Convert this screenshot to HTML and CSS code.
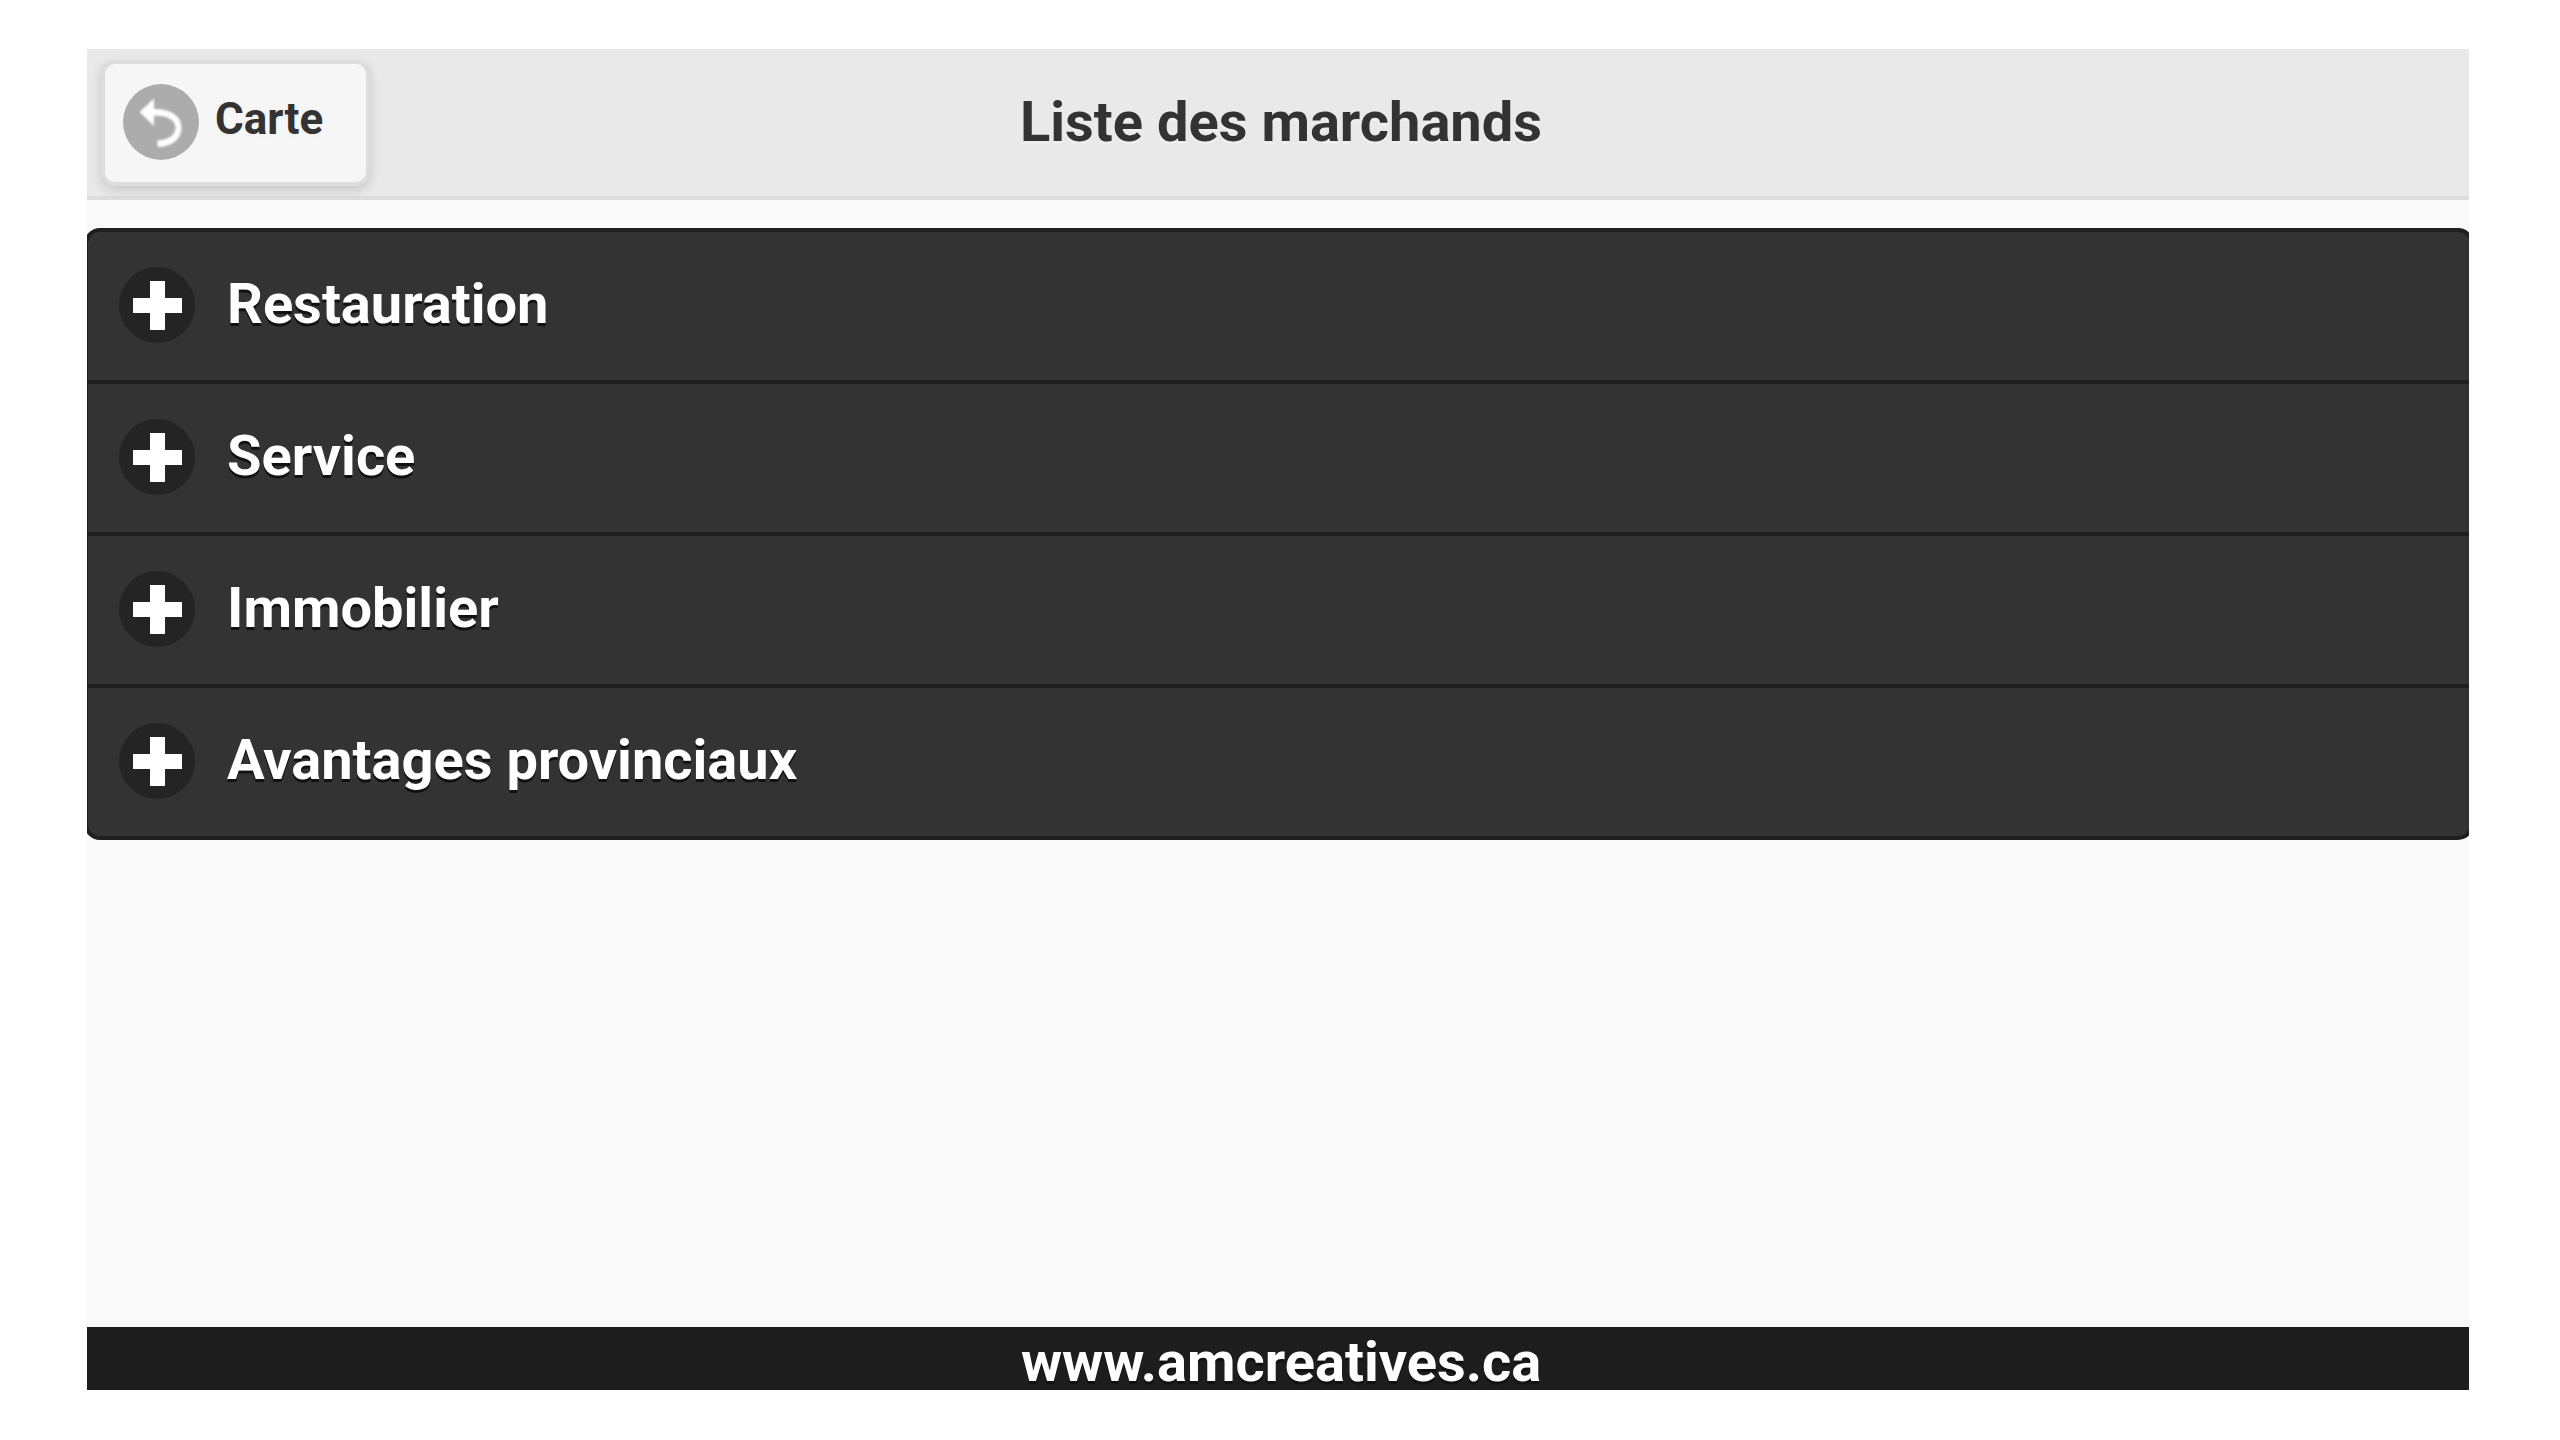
FILE: index.html
```html
<!DOCTYPE html>
<html lang="fr">
<head>
<meta charset="utf-8">
<meta name="viewport" content="width=device-width, initial-scale=1">
<title>Liste des marchands</title>
<link rel="stylesheet" href="styles.css">
</head>
<body>
<svg width="0" height="0" class="sprite" aria-hidden="true">
  <symbol id="plus" viewBox="0 0 76 76">
    <path d="M31 14H46V31H63V46H46V63H31V46H14V31H31Z" fill="#fff"/>
  </symbol>
</svg>
<div class="page">
  <header class="header">
    <a class="back" href="#carte">
      <svg class="icon icon-back" viewBox="0 0 76 76" aria-hidden="true">
        <path class="arrow" d="M16.500 28L31 14.500V25C48 25 58.500 32 58.500 43.500C58.500 55 49 63 34.500 63V56.500C45 56 52.500 51 52.500 43.500C52.500 36 44 31.500 31 31.500V42Z" fill="#fff"/>
      </svg>
      <span class="back-label">Carte</span>
    </a>
    <h1 class="title">Liste des marchands</h1>
  </header>
  <main class="content">
    <div class="list">
      <h2 class="item"><button class="toggle" type="button" aria-expanded="false"><svg class="icon" aria-hidden="true"><use href="#plus"/></svg><span class="label">Restauration</span></button></h2>
      <h2 class="item"><button class="toggle" type="button" aria-expanded="false"><svg class="icon" aria-hidden="true"><use href="#plus"/></svg><span class="label">Service</span></button></h2>
      <h2 class="item"><button class="toggle" type="button" aria-expanded="false"><svg class="icon" aria-hidden="true"><use href="#plus"/></svg><span class="label">Immobilier</span></button></h2>
      <h2 class="item"><button class="toggle" type="button" aria-expanded="false"><svg class="icon" aria-hidden="true"><use href="#plus"/></svg><span class="label">Avantages provinciaux</span></button></h2>
    </div>
  </main>
  <footer class="footer"><a class="site" href="#site">www.amcreatives.ca</a></footer>
</div>
</body>
</html>
```
FILE: styles.css
```css
* {
  box-sizing: border-box;
}

body {
  margin: 0;
  min-height: 100vh;
  padding: 49px 91px 50px 87px;
  display: flex;
  background: #fff;
  color: #333;
  font: bold 56px/1 Roboto, sans-serif;
}

.sprite {
  position: absolute;
}

.page {
  flex: 1;
  min-width: 0;
  display: flex;
  flex-direction: column;
  overflow-x: clip;
  background: #f9f9f9;
}

.header {
  display: grid;
  grid-template-columns: 1fr auto 1fr;
  align-items: center;
  padding: 11px 8px 10px 14px;
  background: #e9e9e9;
  border-bottom: 4px solid #ddd;
}

.back {
  justify-self: start;
  display: flex;
  align-items: center;
  gap: 16px;
  padding: 20px 43px 22px 18px;
  border: 4px solid #ddd;
  border-radius: 14px;
  background: #f6f6f6;
  box-shadow: 0 4px 11px rgba(0, 0, 0, 0.15);
  color: #333;
  font-size: 44px;
  text-decoration: none;
  text-shadow: 0 3px 0 #f3f3f3;
}

.back-label {
  padding-bottom: 6px;
}

.title {
  margin: 0;
  padding-bottom: 2px;
  font-size: 56px;
  text-shadow: 0 3px 0 #eee;
}

.icon {
  flex: none;
  width: 76px;
  height: 76px;
  border-radius: 50%;
  background: #242424;
}

.icon-back {
  background: #acacac;
}

.arrow {
  filter: blur(1px);
}

.content {
  flex: 1;
  padding-top: 28px;
}

.list {
  margin: 0 -5px 0 -3px;
  overflow: hidden;
  border: 4px solid #1f1f1f;
  border-radius: 16px;
  background: #333;
}

.item {
  margin: 0;
  font-size: 56px;
}

.item + .item {
  border-top: 4px solid #1f1f1f;
}

.toggle {
  width: 100%;
  display: flex;
  align-items: center;
  gap: 32px;
  padding: 35px 31px 37px;
  border: 0;
  background: none;
  color: #fff;
  font: inherit;
  text-align: left;
  text-shadow: 0 3px 0 #111;
}

.label {
  padding-bottom: 2px;
}

.footer {
  padding: 8px 0 0 6px;
  background: #1d1d1d;
  text-align: center;
}

.site {
  display: block;
  line-height: 55px;
  color: #fff;
  text-decoration: none;
  text-shadow: 0 3px 0 #111;
}
```
